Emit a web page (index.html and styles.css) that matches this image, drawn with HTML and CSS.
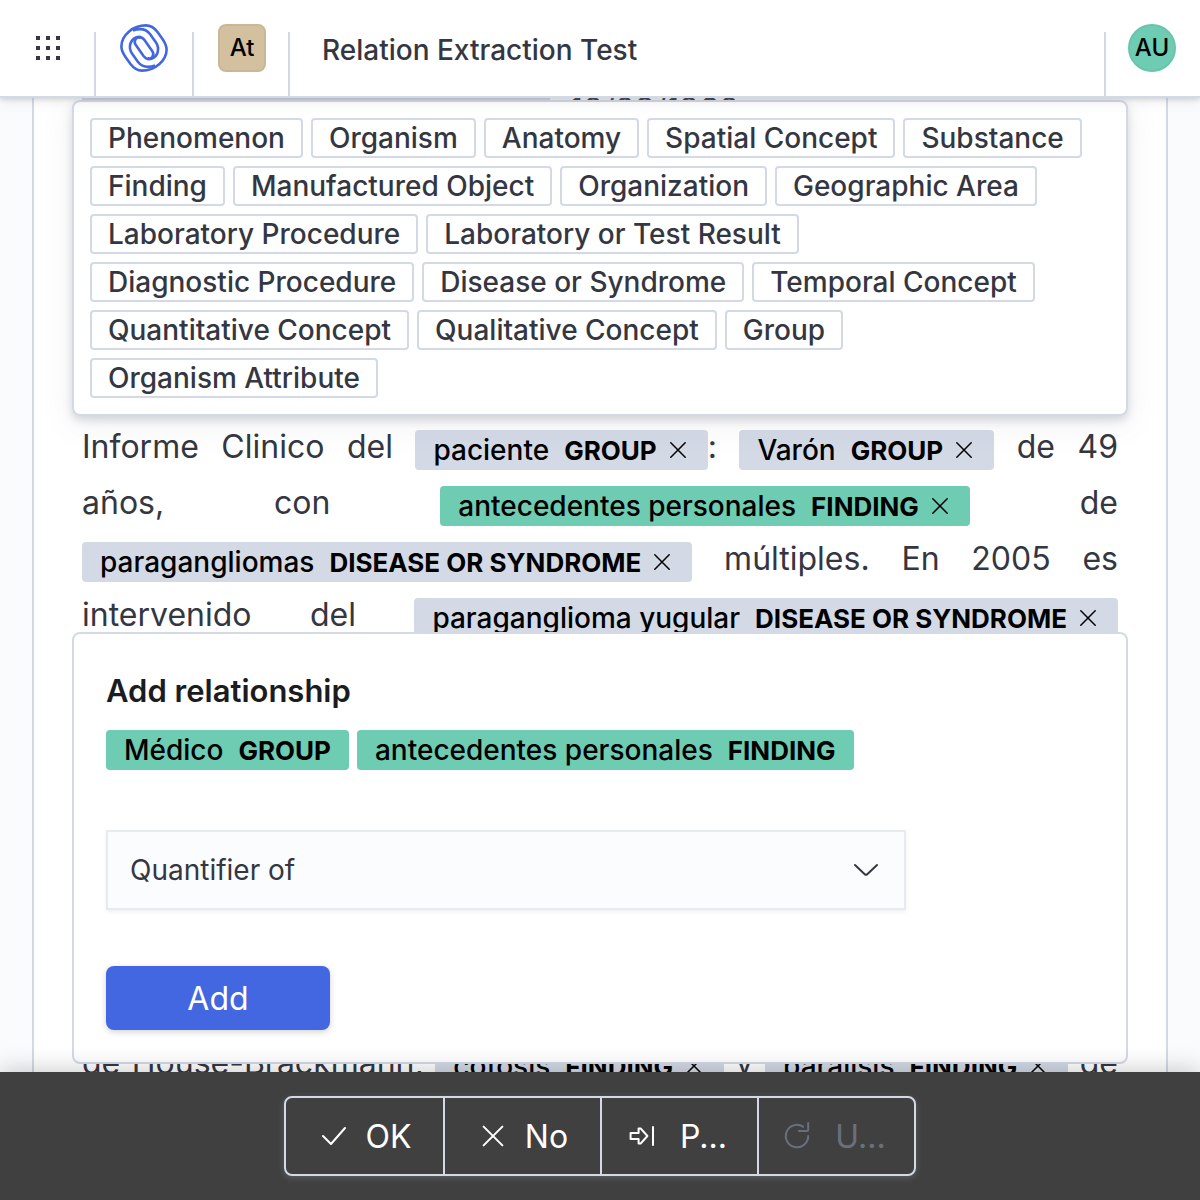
FILE: index.html
```html
<!DOCTYPE html>
<html lang="en">
<head>
<meta charset="utf-8">
<meta name="viewport" content="width=device-width, initial-scale=1">
<title>Relation Extraction Test</title>
<link rel="stylesheet" href="styles.css">
</head>
<body>
<svg width="0" height="0" class="sprite" aria-hidden="true">
  <symbol id="cross" viewBox="0 0 16 16"><path d="M3.2 3.2l9.6 9.6M12.8 3.2l-9.6 9.6" fill="none" stroke="currentColor" stroke-linecap="round"/></symbol>
</svg>

<header class="header">
  <button class="menu" type="button" aria-label="Applications">
    <svg width="24" height="24" viewBox="0 0 24 24" fill="currentColor"><path d="M0 0h4v4H0zM10 0h4v4h-4zM20 0h4v4h-4zM0 10h4v4H0zM10 10h4v4h-4zM20 10h4v4h-4zM0 20h4v4H0zM10 20h4v4h-4zM20 20h4v4h-4z"/></svg>
  </button>
  <a class="cell" href="#" aria-label="Home">
    <svg width="48" height="48" viewBox="0 0 48 48" fill="none" stroke="#4267e0" stroke-width="2.6">
      <path d="M26 1.400C13 1.400 1.400 11 1.400 22.500C1.400 27 3.500 30 5.500 33L10.500 40C13.500 44 17 46.600 22 46.600C35 46.600 46.600 36.500 46.600 25.500C46.600 21.500 44.500 18 42.500 15L37.500 8C34.500 4 31 1.400 26 1.400Z"/>
      <path d="M13 6.500C20 4 26 5 30 10L36 18.500C40 24.500 38 32 32 34.500C28.500 36 25.500 34.500 23.500 32L15.500 20.500C13 16.500 17 12 20.500 14"/>
      <path d="M35 41.500C28 44 22 43 18 38L12 29.500C8 23.500 10 16 16 13.500C19.500 12 22.500 13.500 24.500 16L32.500 27.500C35 31.500 31 36 27.500 34"/>
    </svg>
  </a>
  <a class="cell space" href="#" aria-label="Workspace At"><span class="badge badge-space">At</span></a>
  <div class="cell title"><h1>Relation Extraction Test</h1></div>
  <button class="cell user" type="button"><span class="badge badge-user">AU</span></button>
</header>

<main class="main">
  <article class="document">
    <p class="line line-first"><span class="entity entity-wide"></span><span class="date">10/09/1960</span></p>

    <section class="panel labels" aria-label="Labels">
      <button class="label" type="button">Phenomenon</button>
      <button class="label" type="button">Organism</button>
      <button class="label" type="button">Anatomy</button>
      <button class="label" type="button">Spatial Concept</button>
      <button class="label" type="button">Substance</button>
      <button class="label" type="button">Finding</button>
      <button class="label" type="button">Manufactured Object</button>
      <button class="label" type="button">Organization</button>
      <button class="label" type="button">Geographic Area</button>
      <button class="label" type="button">Laboratory Procedure</button>
      <button class="label" type="button">Laboratory or Test Result</button>
      <button class="label" type="button">Diagnostic Procedure</button>
      <button class="label" type="button">Disease or Syndrome</button>
      <button class="label" type="button">Temporal Concept</button>
      <button class="label" type="button">Quantitative Concept</button>
      <button class="label" type="button">Qualitative Concept</button>
      <button class="label" type="button">Group</button>
      <button class="label" type="button">Organism Attribute</button>
    </section>

    <div class="text">
      <p class="line">Informe Clinico del <span class="entity">paciente <strong>GROUP</strong><button type="button" aria-label="Remove"><svg><use href="#cross"/></svg></button></span>: <span class="entity">Varón <strong>GROUP</strong><button type="button" aria-label="Remove"><svg><use href="#cross"/></svg></button></span> de 49</p>
      <p class="line">años, con <span class="entity selected">antecedentes personales <strong>FINDING</strong><button type="button" aria-label="Remove"><svg><use href="#cross"/></svg></button></span> de</p>
      <p class="line"><span class="entity">paragangliomas <strong>DISEASE OR SYNDROME</strong><button type="button" aria-label="Remove"><svg><use href="#cross"/></svg></button></span> múltiples. En 2005 es</p>
      <p class="line">intervenido del <span class="entity">paraganglioma yugular <strong>DISEASE OR SYNDROME</strong><button type="button" aria-label="Remove"><svg><use href="#cross"/></svg></button></span></p>
    </div>

    <section class="panel relation">
      <h2>Add relationship</h2>
      <div class="pair">
        <span class="entity selected">Médico <strong>GROUP</strong></span>
        <span class="entity selected">antecedentes personales <strong>FINDING</strong></span>
      </div>
      <div class="select">
        <select aria-label="Relationship type"><option>Quantifier of</option></select>
        <svg width="32" height="32" viewBox="0 0 16 16" fill="none" stroke="currentColor" stroke-linecap="round" stroke-linejoin="round"><path d="M2.500 5.500l5 4.700q.5.400 1 0l5-4.700"/></svg>
      </div>
      <button class="add" type="button">Add</button>
    </section>

    <p class="line line-last">de House-Brackmann, <span class="entity">cofosis <strong>FINDING</strong><button type="button" aria-label="Remove"><svg><use href="#cross"/></svg></button></span> y <span class="entity">parálisis <strong>FINDING</strong><button type="button" aria-label="Remove"><svg><use href="#cross"/></svg></button></span> de</p>
  </article>
</main>

<footer class="footer">
  <div class="actions">
    <button type="button"><svg viewBox="0 0 16 16"><path d="M2.500 8l4 4 7-8"/></svg><span>OK</span></button>
    <button type="button"><svg viewBox="0 0 16 16"><path d="M3.300 3.300l9.400 9.400M12.700 3.300l-9.400 9.400"/></svg><span>No</span></button>
    <button type="button"><svg viewBox="0 0 16 16"><path d="M2.300 6.500h4v-2.300h1L10.700 8l-3.400 3.800h-1V9.500h-4zM13.500 3.500v9"/></svg><span class="clipped">P...</span></button>
    <button type="button" disabled><svg viewBox="0 0 16 16"><path d="M11 3.300A5.600 5.600 0 1 0 13.600 8M9 5.500h4a.6.600 0 0 0 .6-.6V1.500"/></svg><span class="clipped">U...</span></button>
  </div>
</footer>
</body>
</html>
```
FILE: styles.css
```css
* {
  box-sizing: border-box;
}

body {
  display: flex;
  flex-direction: column;
  height: 100vh;
  margin: 0;
  background: #fafbfd;
  color: #343741;
  font-family: Inter, "Liberation Sans", sans-serif;
  font-size: 28px;
}

button,
select {
  margin: 0;
  padding: 0;
  border: 0;
  background: none;
  color: inherit;
  font: inherit;
}

a {
  color: inherit;
  text-decoration: none;
}

h1,
h2,
p {
  margin: 0;
}

.sprite {
  position: absolute;
}

/* Header */
.header {
  position: relative;
  z-index: 3;
  display: flex;
  flex: none;
  height: 98px;
  border-bottom: 2px solid #d3dae6;
  background: #fff;
  box-shadow: 0 2px 4px rgba(105, 112, 125, .2), 0 4px 12px rgba(105, 112, 125, .12);
}

.menu {
  display: grid;
  place-items: center;
  width: 94px;
  padding-left: 2px;
}

.cell {
  display: flex;
  align-items: center;
  padding: 0 24px 0 26px;
  background: linear-gradient(#d3dae6, #d3dae6) left bottom / 2px 64px no-repeat;
}

.cell.space {
  padding-right: 22px;
}

.cell.title {
  flex: 1;
  padding: 4px 32px 0 34px;
}

.cell.user {
  padding-left: 24px;
}

.title h1 {
  font-size: 28px;
  font-weight: 500;
}

.badge {
  display: grid;
  place-items: center;
  width: 48px;
  height: 48px;
  color: #000;
  font-size: 24px;
  font-weight: 500;
  line-height: 46px;
}

.badge-space {
  border-radius: 8px;
  background: #d2c09f;
  box-shadow: inset 0 0 0 2px rgba(0, 0, 0, .04);
}

.badge-user {
  border-radius: 50%;
  background: #6dccb1;
  box-shadow: inset 0 0 0 2px rgba(0, 0, 0, .04);
}

/* Document */
.main {
  flex: 1;
  min-height: 0;
  padding: 0 32px;
  overflow: hidden;
}

.document {
  min-height: 100%;
  padding: 0 38px;
  border: solid #d3dae6;
  border-width: 0 2px;
  background: #fff;
}

.line {
  height: 56px;
  padding: 0 10px;
  font-size: 32px;
  line-height: 56px;
  text-align: justify;
  text-align-last: justify;
  white-space: nowrap;
}

.line-first {
  display: flex;
  align-items: center;
  gap: 20px;
  margin-top: -16px;
}

.line-last {
  margin-top: -29px;
}

.text {
  padding-top: 3px;
}

.entity {
  display: inline-flex;
  align-items: baseline;
  gap: 15px;
  height: 40px;
  padding: 0 18px;
  border-radius: 4px;
  background: #d3dae6;
  color: #000;
  font-size: 28px;
  font-weight: 500;
  line-height: 40px;
  vertical-align: -2px;
}

.entity.selected {
  background: #6dccb1;
}

.entity-wide {
  width: 468px;
}

.entity strong {
  font-size: 26px;
  font-weight: 700;
}

.entity button {
  display: grid;
  align-self: center;
  width: 24px;
  height: 24px;
  margin-left: -6px;
}

.entity svg {
  width: 24px;
  height: 24px;
}

/* Panels */
.panel {
  position: relative;
  border: 2px solid #d3dae6;
  border-radius: 8px;
  background: #fff;
}

.labels {
  z-index: 1;
  display: flex;
  flex-wrap: wrap;
  gap: 8px;
  margin-top: -38px;
  padding: 16px;
  box-shadow: 0 4px 8px rgba(105, 112, 125, .25), 0 8px 32px rgba(105, 112, 125, .1);
}

.label {
  height: 40px;
  padding: 0 16px;
  border: 2px solid #d3dae6;
  border-radius: 4px;
  font-weight: 500;
  line-height: 36px;
}

.relation {
  z-index: 2;
  margin-top: -11px;
  padding: 32px;
}

.relation h2 {
  color: #1a1c21;
  font-size: 31px;
  font-weight: 600;
  line-height: 50px;
}

.pair {
  display: flex;
  gap: 8px;
  margin-top: 14px;
}

.select {
  position: relative;
  max-width: 800px;
  margin-top: 60px;
}

.select select {
  display: block;
  width: 100%;
  height: 80px;
  padding: 0 80px 0 22px;
  border: 2px solid #e8eaf2;
  background: #fbfcfd;
  box-shadow: 0 2px 4px rgba(0, 0, 0, .06);
  appearance: none;
}

.select svg {
  position: absolute;
  top: 24px;
  right: 24px;
  pointer-events: none;
}

.add {
  display: block;
  width: 224px;
  height: 64px;
  margin-top: 56px;
  border-radius: 8px;
  background: #4267e0;
  box-shadow: 0 2px 6px rgba(0, 0, 0, .18);
  color: #fff;
  font-size: 32px;
}

/* Footer */
.footer {
  position: relative;
  z-index: 3;
  display: flex;
  flex: none;
  justify-content: center;
  padding: 24px;
  height: 128px;
  background: #404040;
  box-shadow: 0 0 24px rgba(0, 0, 0, .24);
}

.actions {
  display: grid;
  grid-template-columns: repeat(4, 1fr);
  width: 632px;
  height: 80px;
  border: 2px solid #d3dae6;
  border-radius: 8px;
  box-shadow: 0 2px 6px rgba(152, 162, 179, .3);
}

.actions button {
  display: flex;
  align-items: center;
  justify-content: center;
  gap: 16px;
  color: #fff;
  font-size: 32px;
}

.actions button + button {
  border-left: 2px solid #d3dae6;
}

.actions button:disabled {
  color: #69707d;
}

.actions .clipped {
  padding: 0 6px;
}

.actions svg {
  width: 32px;
  height: 32px;
  fill: none;
  stroke: currentColor;
  stroke-linecap: round;
  stroke-linejoin: round;
}
```
